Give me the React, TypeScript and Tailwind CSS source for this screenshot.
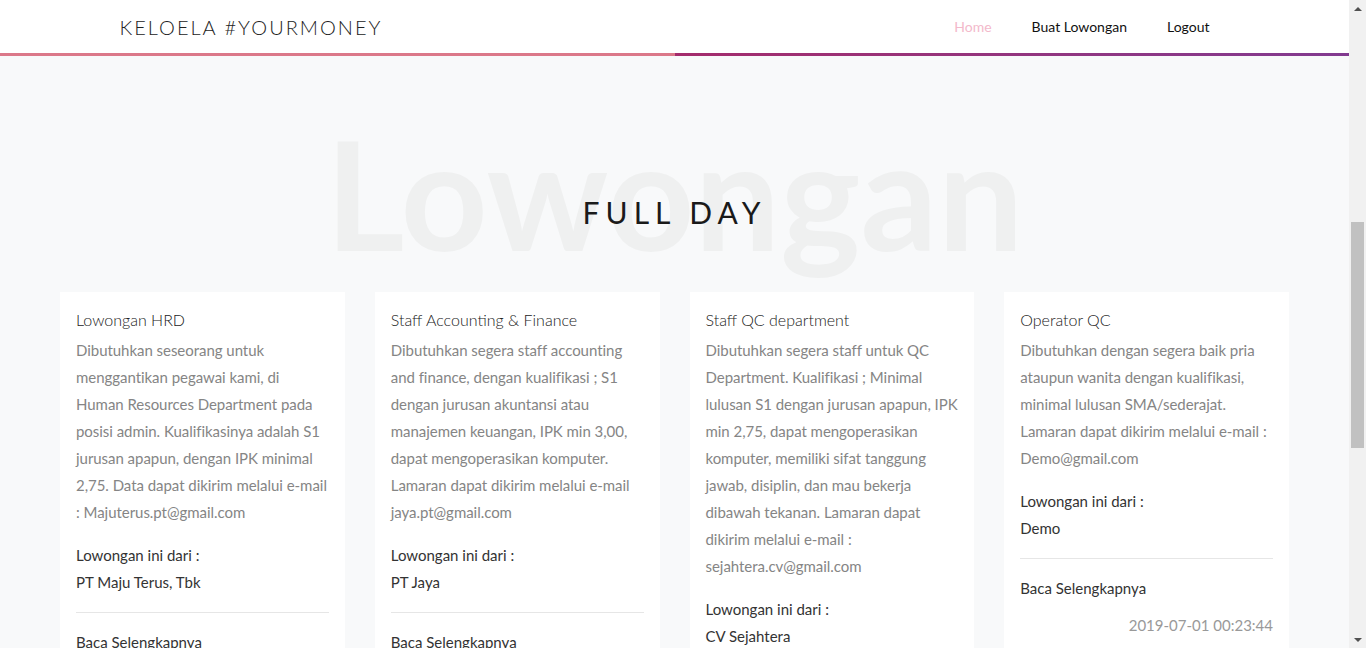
const JOBS = [
  {
    title: 'Lowongan HRD',
    desc: 'Dibutuhkan seseorang untuk menggantikan pegawai kami, di Human Resources Department pada posisi admin. Kualifikasinya adalah S1 jurusan apapun, dengan IPK minimal 2,75. Data dapat dikirim melalui e-mail : Majuterus.pt@gmail.com',
    company: 'PT Maju Terus, Tbk',
    date: '2019-06-30 21:14:05',
  },
  {
    title: 'Staff Accounting & Finance',
    desc: 'Dibutuhkan segera staff accounting and finance, dengan kualifikasi ; S1 dengan jurusan akuntansi atau manajemen keuangan, IPK min 3,00, dapat mengoperasikan komputer. Lamaran dapat dikirim melalui e-mail jaya.pt@gmail.com',
    company: 'PT Jaya',
    date: '2019-06-30 21:20:37',
  },
  {
    title: 'Staff QC department',
    desc: 'Dibutuhkan segera staff untuk QC Department. Kualifikasi ; Minimal lulusan S1 dengan jurusan apapun, IPK min 2,75, dapat mengoperasikan komputer, memiliki sifat tanggung jawab, disiplin, dan mau bekerja dibawah tekanan. Lamaran dapat dikirim melalui e-mail : sejahtera.cv@gmail.com',
    company: 'CV Sejahtera',
    date: '2019-06-30 21:26:12',
  },
  {
    title: 'Operator QC',
    desc: 'Dibutuhkan dengan segera baik pria ataupun wanita dengan kualifikasi, minimal lulusan SMA/sederajat. Lamaran dapat dikirim melalui e-mail : Demo@gmail.com',
    company: 'Demo',
    date: '2019-07-01 00:23:44',
  },
]

function Header() {
  return (
    <header className="bg-white">
      <div className="h-[53px] w-[1140px] mx-auto px-[15px] flex items-center justify-between">
        <a className="text-[20px] font-light tracking-[2px] text-[#222] leading-none">KELOELA #YOURMONEY</a>
        <nav className="flex items-center text-[14px] text-[#111]">
          <a className="px-5 text-[#f3b9cb]">Home</a>
          <a className="px-5">Buat Lowongan</a>
          <a className="px-5">Logout</a>
        </nav>
      </div>
      <div className="flex h-[3px]">
        <div className="flex-1 bg-[#db7889]" />
        <div className="flex-1 bg-gradient-to-r from-[#a42b6c] to-[#823a90]" />
      </div>
    </header>
  )
}

function JobCard({ job }: { job: (typeof JOBS)[number] }) {
  return (
    <div className="bg-white px-4 pt-4 pb-4">
      <h3 className="text-[16px] font-light leading-6 text-[#222]">{job.title}</h3>
      <p className="mt-[5px] text-[15px] leading-[27px] tracking-[-0.04px] text-[#858585]">{job.desc}</p>
      <p className="mt-4 text-[15px] leading-[27px] text-[#333]">Lowongan ini dari :</p>
      <p className="text-[15px] leading-[27px] text-[#333]">{job.company}</p>
      <hr className="my-4 border-[#e6e6e6]" />
      <a className="block text-[15px] leading-[27px] text-[#333]">Baca Selengkapnya</a>
      <p className="mt-2.5 text-right text-[15px] leading-[27px] text-[#999]">{job.date}</p>
    </div>
  )
}

function Scrollbar() {
  return (
    <div className="w-[17px] shrink-0 bg-[#f1f1f1] flex flex-col">
      <div className="h-[17px] flex items-center justify-center">
        <div className="w-0 h-0 border-x-[4px] border-x-transparent border-b-[4px] border-b-[#505050]" />
      </div>
      <div className="flex-1 px-[2px] pt-[205px]">
        <div className="h-[226px] bg-[#c1c1c1]" />
      </div>
      <div className="h-[17px] flex items-center justify-center">
        <div className="w-0 h-0 border-x-[4px] border-x-transparent border-t-[4px] border-t-[#505050]" />
      </div>
    </div>
  )
}

export default function App() {
  return (
    <div className="h-screen flex overflow-hidden font-['Lato',sans-serif]">
      <main className="flex-1 min-w-0 bg-[#f8f9fa] pb-10">
        <Header />
        <section className="px-[60px]">
          <div className="relative mt-[60px] text-center">
            <div className="text-[152px] font-bold leading-none text-[#eff0f0] select-none">Lowongan</div>
            <h2 className="absolute left-0 right-0 top-[81px] text-[30px] leading-none tracking-[6px] text-[#1a1a1a]">
              FULL DAY
            </h2>
          </div>
          <div className="mt-6 grid grid-cols-4 gap-[30px] items-start">
            {JOBS.map(job => (
              <JobCard key={job.title} job={job} />
            ))}
          </div>
        </section>
      </main>
      <Scrollbar />
    </div>
  )
}
